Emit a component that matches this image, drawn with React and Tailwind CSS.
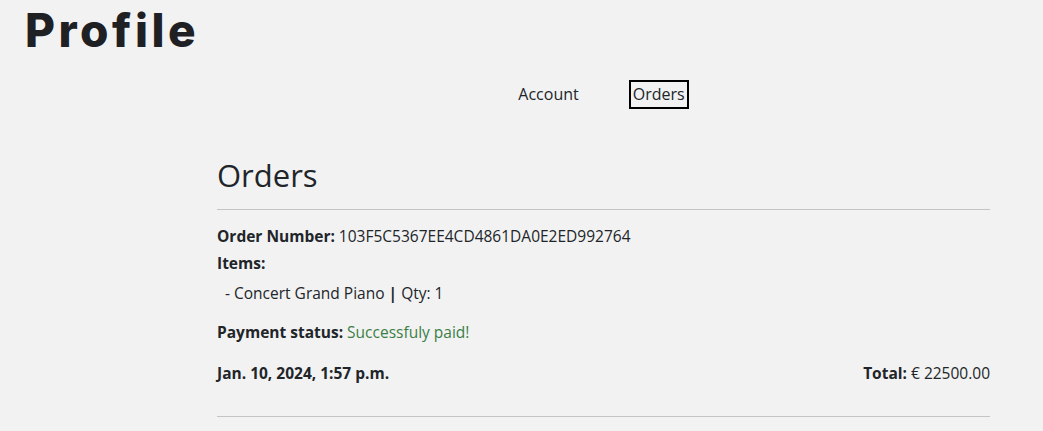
export default function App() {
  const body = { fontFamily: '"Open Sans", "Noto Sans", sans-serif' };
  return (
    <div className="min-h-[431px] bg-[#f2f2f2] text-[#212529]" style={body}>
      <div className="pl-[25px] pt-[2px]">
        <h1 className="text-[46px] leading-[56px] font-extrabold tracking-[3.5px] text-[#1f2024]" style={{ fontFamily: 'Inter, sans-serif' }}>
          Profile
        </h1>
      </div>
      <div className="pl-[217px] pr-[53px]">
        <nav className="flex justify-center items-center gap-[50px] mt-[22px] text-[16px] leading-[21px]">
          <span className="py-[2px]">Account</span>
          <span className="px-[2px] py-[2px] border-2 border-black">Orders</span>
        </nav>
        <h2 className="text-[31px] leading-[40px] mt-[46px]">Orders</h2>
        <hr className="mt-[14px] border-t border-[#c4c4c4]" />
        <div className="text-[15.5px] leading-[20px]">
          <p className="mt-[16px]"><b>Order Number:</b> 103F5C5367EE4CD4861DA0E2ED992764</p>
          <p className="mt-[7px]"><b>Items:</b></p>
          <p className="mt-[10px] pl-[8px]">- Concert Grand Piano <b>|</b> Qty: 1</p>
          <p className="mt-[19px]"><b>Payment status:</b> <span className="text-[#3b7f45]">Successfuly paid!</span></p>
          <div className="mt-[21px] flex justify-between">
            <b>Jan. 10, 2024, 1:57 p.m.</b>
            <span><b>Total:</b> € 22500.00</span>
          </div>
        </div>
        <hr className="mt-[33px] border-t border-[#c4c4c4]" />
      </div>
    </div>
  );
}
